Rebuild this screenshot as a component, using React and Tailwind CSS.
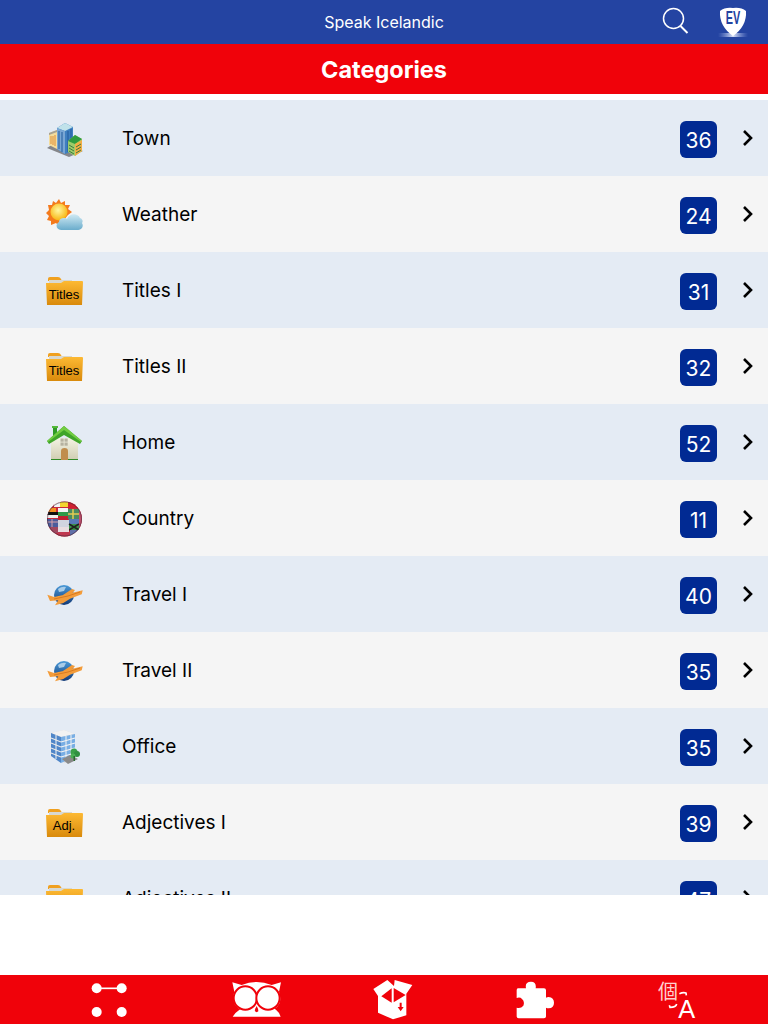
import React from 'react';

const FONT = 'font-["Inter","Liberation_Sans",sans-serif]';

function TownIcon() {
  return (
    <svg width="37" height="37" viewBox="0 0 37 37">
      <polygon points="1,28 10,22 37,31 23,37" fill="#85868a" />
      <polygon points="3,13 11,10 11,29 3,25" fill="#f4dc9c" />
      <polygon points="3,13 11,10 11,12 3,15" fill="#a8a294" />
      <path d="M5 16v8M7 16v9M9 15v11" stroke="#e29c48" strokeWidth="1.2" />
      <polygon points="11,8 19,3 27,7 27,31 19,34 11,29" fill="#3f7fc0" />
      <polygon points="11,8 19,3 27,7 19,11" fill="#c0e2ea" />
      <polygon points="11,8 19,11 19,34 11,29" fill="#79a6d4" />
      <path d="M13 11v18M16 12v20M22 11v21M25 9v21" stroke="#235a9c" strokeWidth="1" />
      <polygon points="22,21 29,15 36,19 36,31 29,36 22,32" fill="#9ccc6a" />
      <polygon points="22,21 29,15 36,19 29,24" fill="#2f9c3e" />
      <polygon points="29,24 36,20 36,31 29,36" fill="#f2ae44" />
      <path d="M23 25l5 3M23 28l5 3M23 31l5 3M30 27l5-3M30 30l5-3M30 33l5-3" stroke="#3c7a40" strokeWidth="1" />
    </svg>
  );
}

function WeatherIcon() {
  return (
    <svg width="37" height="37" viewBox="0 0 37 37">
      <defs>
        <radialGradient id="sun" cx="0.45" cy="0.4" r="0.6">
          <stop offset="0" stopColor="#fff7a0" />
          <stop offset="1" stopColor="#f8b510" />
        </radialGradient>
        <linearGradient id="cloud" x1="0" y1="0" x2="0" y2="1">
          <stop offset="0" stopColor="#cfe9f3" />
          <stop offset="1" stopColor="#6aaccc" />
        </linearGradient>
      </defs>
      <polygon
        points="13,3 15,7 19,5 19,9 24,9 22,13 26,16 22,19 13,30 10,27 5,29 5,25 1,24 3,20 0,17 3,14 2,9 6,9 7,5 10,7"
        fill="#f47a1c"
      />
      <circle cx="13" cy="16" r="8.5" fill="url(#sun)" />
      <path
        d="M15 34c-5 0-6-6-2-8 0-4 6-5 8-3 2-6 11-6 13-1 3 1 3 4 2 5 2 3 0 7-5 7z"
        fill="url(#cloud)"
      />
    </svg>
  );
}

function FolderIcon({ label, id, size = 13, y = 26.5 }) {
  return (
    <svg width="37" height="37" viewBox="0 0 37 37">
      <defs>
        <linearGradient id={id} x1="0" y1="0" x2="0" y2="1">
          <stop offset="0" stopColor="#fdb933" />
          <stop offset="1" stopColor="#d98a0c" />
        </linearGradient>
      </defs>
      <path d="M2 9V6.5Q2 5 4 5h8q2 0 3 2l1 2z" fill="#f0a01f" />
      <rect x="3" y="8" width="23" height="4" fill="#d8d8d0" />
      <path d="M0 11l15 0 3-2h18q1 0 1 1l-1 23H1z" fill={`url(#${id})`} />
      <text
        x="18"
        y={y}
        textAnchor="middle"
        fontSize={size}
        fontFamily="Liberation Sans, sans-serif"
        fill="#000"
      >
        {label}
      </text>
    </svg>
  );
}

function HomeIcon() {
  return (
    <svg width="37" height="37" viewBox="0 0 37 37">
      <defs>
        <linearGradient id="wall" x1="0" y1="0" x2="0" y2="1">
          <stop offset="0" stopColor="#f4f3e4" />
          <stop offset="1" stopColor="#cfcdb2" />
        </linearGradient>
      </defs>
      <rect x="7" y="3" width="4" height="9" fill="#2f9a28" />
      <rect x="6" y="2" width="6" height="2" fill="#53b83a" />
      <rect x="5" y="14" width="27" height="22" fill="url(#wall)" />
      <path d="M5 35.5h27" stroke="#2f8a25" strokeWidth="1" />
      <path d="M1 17L18 2l18 15-2 3-16-9L3 20z" fill="#3fa52a" />
      <path d="M18 2l18 15-1 1L18 6 2 18l-1-1z" fill="#72cc42" />
      <rect x="14.5" y="14.5" width="3.2" height="3.2" fill="#b5b2a0" />
      <rect x="18.5" y="14.5" width="3.2" height="3.2" fill="#b5b2a0" />
      <rect x="14.5" y="18.5" width="3.2" height="3.2" fill="#b5b2a0" />
      <rect x="18.5" y="18.5" width="3.2" height="3.2" fill="#b5b2a0" />
      <path d="M15 36V27q0-3 3.5-3t3.5 3v9z" fill="#c08d4d" />
    </svg>
  );
}

function CountryIcon() {
  return (
    <svg width="37" height="37" viewBox="0 0 37 37">
      <defs>
        <clipPath id="globe">
          <circle cx="18.5" cy="19" r="17.5" />
        </clipPath>
      </defs>
      <g clipPath="url(#globe)">
        <rect x="0" y="0" width="37" height="37" fill="#c8283c" />
        <rect x="8" y="2" width="6" height="5" fill="#f4f4f4" />
        <rect x="14" y="2" width="8" height="5" fill="#f4d430" />
        <rect x="22" y="2" width="12" height="6" fill="#d02030" />
        <rect x="1" y="8" width="9" height="4" fill="#f09020" />
        <rect x="1" y="12" width="11" height="3" fill="#101010" />
        <rect x="1" y="15" width="11" height="3" fill="#f0f0f0" />
        <rect x="12" y="8" width="10" height="4" fill="#f4f4f4" />
        <rect x="12" y="12" width="10" height="4" fill="#2f9a48" />
        <rect x="12" y="16" width="10" height="4" fill="#c02030" />
        <rect x="22" y="9" width="11" height="10" fill="#4a8a60" />
        <path d="M22 14h11M27 9v10" stroke="#e4cc50" strokeWidth="1.5" />
        <rect x="33" y="8" width="4" height="24" fill="#c8506c" />
        <rect x="1" y="19" width="11" height="8" fill="#4a5c9c" />
        <path d="M1 22h11M6 19v8" stroke="#d8a0a8" strokeWidth="1" />
        <rect x="12" y="20" width="11" height="7" fill="#d0d4e0" />
        <rect x="23" y="19" width="10" height="5" fill="#5878b8" />
        <rect x="23" y="24" width="10" height="6" fill="#3a9048" />
        <path d="M23 24l10 6M33 24l-10 6" stroke="#202020" strokeWidth="1.5" />
        <rect x="3" y="27" width="9" height="6" fill="#a04860" />
        <rect x="12" y="27" width="11" height="5" fill="#e8dce0" />
        <rect x="12" y="32" width="12" height="5" fill="#c03850" />
        <rect x="24" y="30" width="8" height="7" fill="#6070a8" />
      </g>
      <circle cx="18.5" cy="19" r="17" fill="none" stroke="#302838" strokeOpacity="0.5" />
    </svg>
  );
}

function TravelIcon() {
  return (
    <svg width="37" height="37" viewBox="0 0 37 37">
      <defs>
        <linearGradient id="planet" x1="0" y1="0" x2="0" y2="1">
          <stop offset="0" stopColor="#4a9ad8" />
          <stop offset="1" stopColor="#123a78" />
        </linearGradient>
      </defs>
      <circle cx="18" cy="19" r="10" fill="url(#planet)" />
      <path d="M12 13q4-3 8-2l-2 4-5 1z" fill="#a8cce8" />
      <polygon points="17,19 26,13 29,14 24,20" fill="#f29a38" />
      <polygon
        points="1.3,18.7 8,21 20.7,18.3 36.7,14.3 35.7,18.3 24,22.7 17.3,27 9,29.3 12.3,24.3 4,25"
        fill="#f39c3a"
      />
      <path d="M8 23l14-3 12-4" stroke="#d87a20" strokeWidth="1" fill="none" />
    </svg>
  );
}

function OfficeIcon() {
  return (
    <svg width="37" height="37" viewBox="0 0 37 37">
      <polygon points="5,5 18,2 29,6 29,29 19,35 5,28" fill="#dcdcdc" />
      <polygon points="5,5 18,2 29,6 15,9" fill="#f2f2f2" />
      <polygon points="15,9 29,6 29,29 15,35" fill="#78aee4" />
      <polygon points="5,5 15,9 15,35 5,28" fill="#4f86c8" />
      <path d="M5 10l10 4M5 15l10 4M5 20l10 4M5 25l10 4" stroke="#e8e8e8" strokeWidth="1.3" />
      <path d="M15 14l14-4M15 19l14-4M15 24l14-4M15 29l14-4" stroke="#f4f4f4" strokeWidth="1.3" />
      <path d="M20 8v25M25 7v24M10 7v24" stroke="#f4f4f4" strokeWidth="1" />
      <polygon points="16,31 24,27 32,31 22,36" fill="#8a8a8a" />
      <circle cx="28" cy="24" r="3.5" fill="#3aa048" />
      <circle cx="31" cy="26" r="3" fill="#2f9040" />
      <circle cx="27" cy="28" r="2.5" fill="#4ab055" />
      <rect x="27.5" y="28" width="1.5" height="5" fill="#2a6a30" />
    </svg>
  );
}

const rows = [
  { name: 'Town', count: 36, icon: <TownIcon /> },
  { name: 'Weather', count: 24, icon: <WeatherIcon /> },
  { name: 'Titles I', count: 31, icon: <FolderIcon label="Titles" id="f1" /> },
  { name: 'Titles II', count: 32, icon: <FolderIcon label="Titles" id="f2" /> },
  { name: 'Home', count: 52, icon: <HomeIcon /> },
  { name: 'Country', count: 11, icon: <CountryIcon /> },
  { name: 'Travel I', count: 40, icon: <TravelIcon /> },
  { name: 'Travel II', count: 35, icon: <TravelIcon /> },
  { name: 'Office', count: 35, icon: <OfficeIcon /> },
  { name: 'Adjectives I', count: 39, icon: <FolderIcon label="Adj." id="f3" y={26} /> },
  { name: 'Adjectives II', count: 47, icon: <FolderIcon label="Adj." id="f4" y={26} /> },
];

function Row({ row, index }) {
  return (
    <div className={`flex h-[76px] shrink-0 items-center pl-[46px] pr-[14px] ${index % 2 === 0 ? 'bg-[#e4ebf4]' : 'bg-[#f5f5f5]'}`}>
      <div className="h-[37px] w-[37px] shrink-0">{row.icon}</div>
      <div className="ml-[39px] flex-1 pt-[2px] text-[19px] text-black">{row.name}</div>
      <div className="mt-[3px] flex h-[37px] w-[37px] items-center justify-center rounded-md bg-[#012a93] pt-[2px] text-[21px] text-white">
        {row.count}
      </div>
      <svg className="ml-[24px]" width="13" height="18" viewBox="0 0 13 18">
        <path d="M3 2l7 7-7 7" fill="none" stroke="black" strokeWidth="2.6" />
      </svg>
    </div>
  );
}

export default function App() {
  return (
    <div className={`flex h-screen flex-col bg-white ${FONT}`}>
      {/* top bar */}
      <div className="grid h-[44px] shrink-0 grid-cols-[1fr_auto_1fr] items-center bg-[#2444a2] text-white">
        <div />
        <div className="text-[16px]">Speak Icelandic</div>
        <div className="flex items-center justify-end pr-[20px]">
          <svg className="mb-[3px]" width="28" height="28" viewBox="0 0 28 28">
            <circle cx="11.5" cy="11.5" r="10" fill="none" stroke="white" strokeWidth="1.5" />
            <path d="M18.5 19l7 7" stroke="white" strokeWidth="2" />
          </svg>
          <svg className="ml-[28px]" width="30" height="36" viewBox="0 0 30 36">
            <defs>
              <linearGradient id="glow" x1="0" y1="0" x2="1" y2="0">
                <stop offset="0" stopColor="#8fa4e0" stopOpacity="0" />
                <stop offset="0.5" stopColor="#dbe3f8" />
                <stop offset="1" stopColor="#8fa4e0" stopOpacity="0" />
              </linearGradient>
            </defs>
            <rect x="0" y="29" width="30" height="4" fill="url(#glow)" />
            <path d="M15 4q8-1 13 3 1 15-13 25Q1 22 2 7q5-4 13-3z" fill="white" />
            <g transform="translate(15 20) scale(0.72 1.25)">
              <text x="0" y="0" textAnchor="middle" fontSize="15" fontWeight="700" fontFamily="Liberation Sans, sans-serif" fill="#2343a0">
                EV
              </text>
            </g>
          </svg>
        </div>
      </div>
      <div className="flex h-[50px] shrink-0 items-center justify-center bg-[#f0020a] pt-[2px] text-[23.5px] font-bold text-white">
        Categories
      </div>

      {/* category list */}
      <div className="mt-[6px] flex h-[795px] shrink-0 flex-col overflow-hidden">
        {rows.map((row, i) => (
          <Row key={row.name} row={row} index={i} />
        ))}
      </div>
      <div className="h-[80px] shrink-0" />

      {/* tab bar */}
      <div className="flex h-[49px] shrink-0 items-center bg-[#f0020a] pl-[90px]">
        <svg width="40" height="49" viewBox="90 15 120 147">
          <path d="M110 55h75" stroke="white" strokeWidth="5" />
          <circle cx="110" cy="55" r="15" fill="white" />
          <circle cx="185" cy="55" r="15" fill="white" />
          <circle cx="110" cy="126" r="15" fill="white" />
          <circle cx="185" cy="126" r="15" fill="white" />
        </svg>
        <svg className="ml-[100px]" width="54" height="49" viewBox="510 15 162 147">
          <path d="M517 37l28 8q45-18 90 0l28-8-6 28q12 35-12 50-30 22-50 8-25 14-60-8-22-18-12-50z" fill="white" />
          <path d="M518 140q18-28 50-30l25 12 28-12q32 2 41 30z" fill="white" />
          <circle cx="556" cy="84" r="35" fill="white" stroke="#f0020a" strokeWidth="6" />
          <circle cx="624" cy="84" r="35" fill="white" stroke="#f0020a" strokeWidth="6" />
          <path d="M590 108q-7 10-5 16 5 5 10 0 1-6-5-16z" fill="#f0020a" />
        </svg>
        <svg className="ml-[88px]" width="42" height="49" viewBox="936 15 126 147">
          <path d="M940 57l42-27 20 18 2-18 53 15-18 26v65l-40 12-45-20v-50z" fill="white" />
          <path d="M964 79l31-24v43z" fill="#f0020a" />
          <path d="M1001 54l36 21-36 22z" fill="#f0020a" />
          <path d="M1019 98h6v13h6l-9 13-9-13h6z" fill="#f0020a" />
        </svg>
        <svg className="ml-[100px]" width="42" height="49" viewBox="72 15 126 147">
          <path
            d="M84 55h24q-4-20 15-20 17 0 14 20h25q6 0 6 6v22q3-2 8-2 16 2 16 17 0 16-16 17-5 0-8-2v26q0 6-6 6H86q-6 0-6-6v-26q12 4 20-6 5-12-4-20-6-7-16-3V61q0-6 4-6z"
            fill="white"
          />
        </svg>
        <svg className="ml-[101px]" width="40" height="49" viewBox="501 15 120 147" fontFamily="Liberation Sans, sans-serif">
          <text x="504" y="86" fontSize="60" fill="#ffd0d0" fontFamily="Noto Sans CJK TC, sans-serif">
            個
          </text>
          <path d="M568 71q12-5 20-2l1 7" fill="none" stroke="white" strokeWidth="5" />
          <path d="M560 102q-2 10-20 10l-2-6" fill="none" stroke="white" strokeWidth="5" />
          <text x="565" y="145" fontSize="76" fill="white">
            A
          </text>
        </svg>
      </div>
    </div>
  );
}
